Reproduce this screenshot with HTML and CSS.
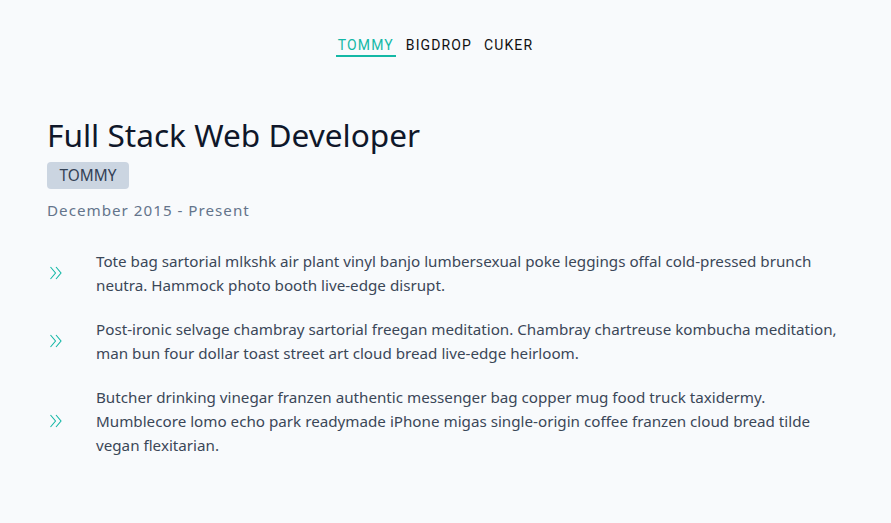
FILE: index.html
```html
<!DOCTYPE html>
<html>
<head>
<meta charset="utf-8">
<link rel="stylesheet" href="styles.css">
</head>
<body>
<nav class="tabs">
  <span class="tab active">TOMMY</span>
  <span class="tab">BIGDROP</span>
  <span class="tab">CUKER</span>
</nav>
<main class="job">
  <h1 class="title">Full Stack Web Developer</h1>
  <span class="badge">TOMMY</span>
  <p class="date">December 2015 - Present</p>
  <ul class="list">
    <li class="item">
      <svg class="icon" viewBox="0 0 13 14" width="13" height="14"><path d="M1.5 1l5 6-5 6M7 1l5 6-5 6" fill="none" stroke="#14b8a6" stroke-width="1.1"/></svg>
      <p>Tote bag sartorial mlkshk air plant vinyl banjo lumbersexual poke leggings offal cold-pressed brunch neutra. Hammock photo booth live-edge disrupt.</p>
    </li>
    <li class="item">
      <svg class="icon" viewBox="0 0 13 14" width="13" height="14"><path d="M1.5 1l5 6-5 6M7 1l5 6-5 6" fill="none" stroke="#14b8a6" stroke-width="1.1"/></svg>
      <p>Post-ironic selvage chambray sartorial freegan meditation. Chambray chartreuse kombucha meditation, man bun four dollar toast street art cloud bread live-edge heirloom.</p>
    </li>
    <li class="item">
      <svg class="icon" viewBox="0 0 13 14" width="13" height="14"><path d="M1.5 1l5 6-5 6M7 1l5 6-5 6" fill="none" stroke="#14b8a6" stroke-width="1.1"/></svg>
      <p>Butcher drinking vinegar franzen authentic messenger bag copper mug food truck taxidermy. Mumblecore lomo echo park readymade iPhone migas single-origin coffee franzen cloud bread tilde vegan flexitarian.</p>
    </li>
  </ul>
</main>
</body>
</html>
```
FILE: styles.css
```css
html, body { margin: 0; padding: 0; }
body {
  background: #f8fafc;
  font-family: "Noto Sans", "Open Sans", sans-serif;
  color: #3b4758;
  width: 891px;
  height: 523px;
  overflow: hidden;
}
.tabs {
  display: flex;
  justify-content: center;
  gap: 8px;
  padding: 37px 20px 0 0;
  font-family: Roboto, sans-serif;
  font-size: 14px;
  letter-spacing: 0.08em;
}
.tab {
  color: #111111;
  padding: 0 2px 1px 2px;
  line-height: 17px;
  border-bottom: 2px solid transparent;
}
.tab.active {
  color: #14b8a6;
  border-bottom-color: #14b8a6;
}
.job {
  padding: 60px 47px 0;
  display: flex;
  flex-direction: column;
  align-items: flex-start;
}
.title {
  margin: 0;
  font-weight: 400;
  font-size: 31.6px;
  line-height: 36px;
  color: #0f172a;
}
.badge {
  margin-top: 9px;
  background: #cbd5e1;
  color: #334155;
  border-radius: 4px;
  padding: 0 12.5px;
  font-size: 15.4px;
  line-height: 27px;
}
.date {
  margin: 9px 0 0;
  color: #64748b;
  font-size: 15.2px;
  letter-spacing: 1px;
  line-height: 24px;
}
.list {
  list-style: none;
  margin: 27px 0 0;
  padding: 0;
  display: flex;
  flex-direction: column;
  gap: 20px;
  width: 797px;
}
.item {
  display: flex;
  align-items: center;
}
.icon {
  flex: none;
  margin: 0 34px 0 2px;
}
.item p {
  margin: 0;
  font-size: 15.2px;
  line-height: 24px;
}
```
